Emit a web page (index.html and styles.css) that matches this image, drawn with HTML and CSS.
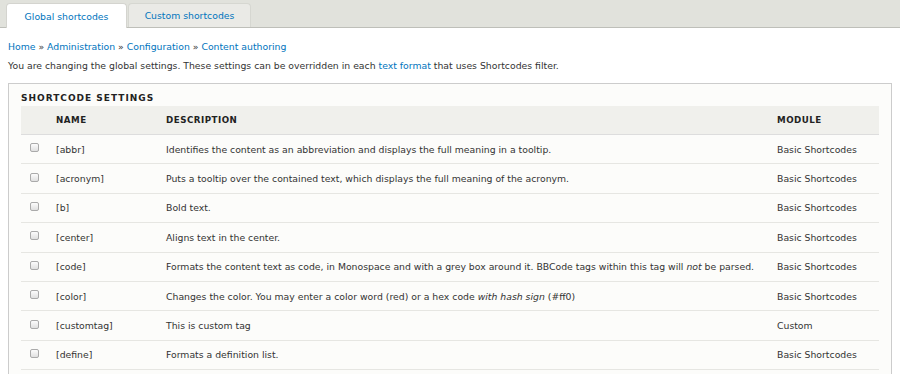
FILE: index.html
```html
<!DOCTYPE html>
<html>
<head>
<meta charset="utf-8">
<link rel="stylesheet" href="styles.css">
</head>
<body>
<div class="tabbar">
  <ul class="tabs">
    <li class="tab active"><a href="#">Global shortcodes</a></li>
    <li class="tab"><a href="#">Custom shortcodes</a></li>
  </ul>
</div>
<div class="content">
  <nav class="breadcrumb"><a href="#">Home</a> » <a href="#">Administration</a> » <a href="#">Configuration</a> » <a href="#">Content authoring</a></nav>
  <p class="intro">You are changing the global settings. These settings can be overridden in each <a href="#">text format</a> that uses Shortcodes filter.</p>
  <fieldset class="box">
    <div class="legend">Shortcode settings</div>
    <table class="grid">
      <thead>
        <tr><th class="c-check"></th><th class="c-name">Name</th><th class="c-desc">Description</th><th class="c-mod">Module</th></tr>
      </thead>
      <tbody>
        <tr><td class="c-check"><span class="cb"></span></td><td>[abbr]</td><td>Identifies the content as an abbreviation and displays the full meaning in a tooltip.</td><td>Basic Shortcodes</td></tr>
        <tr><td class="c-check"><span class="cb"></span></td><td>[acronym]</td><td>Puts a tooltip over the contained text, which displays the full meaning of the acronym.</td><td>Basic Shortcodes</td></tr>
        <tr><td class="c-check"><span class="cb"></span></td><td>[b]</td><td>Bold text.</td><td>Basic Shortcodes</td></tr>
        <tr><td class="c-check"><span class="cb"></span></td><td>[center]</td><td>Aligns text in the center.</td><td>Basic Shortcodes</td></tr>
        <tr><td class="c-check"><span class="cb"></span></td><td>[code]</td><td>Formats the content text as code, in Monospace and with a grey box around it. BBCode tags within this tag will <em>not</em> be parsed.</td><td>Basic Shortcodes</td></tr>
        <tr><td class="c-check"><span class="cb"></span></td><td>[color]</td><td>Changes the color. You may enter a color word (red) or a hex code <em>with hash sign</em> (#ff0)</td><td>Basic Shortcodes</td></tr>
        <tr><td class="c-check"><span class="cb"></span></td><td>[customtag]</td><td>This is custom tag</td><td>Custom</td></tr>
        <tr><td class="c-check"><span class="cb"></span></td><td>[define]</td><td>Formats a definition list.</td><td>Basic Shortcodes</td></tr>
      </tbody>
    </table>
  </fieldset>
</div>
</body>
</html>
```
FILE: styles.css
```css
html, body {
  margin: 0;
  padding: 0;
  background: #fff;
  font-family: "DejaVu Sans", sans-serif;
  color: #333;
  font-size: 9.3px;
}
a { color: #0074bd; text-decoration: none; }
.tabbar {
  background: #e1e2dc;
  border-bottom: 1px solid #bebfb9;
  height: 27px;
  padding: 0 6px;
}
.tabs {
  list-style: none;
  margin: 0;
  padding: 3px 0 0;
  display: flex;
  gap: 1px;
}
.tab {
  height: 24px;
  border-radius: 4px 4px 0 0;
  background: #eaeae6;
  border: 1px solid #d6d7d1;
  border-bottom: none;
  box-sizing: border-box;
  display: flex;
  align-items: center;
  justify-content: center;
  width: 123px;
  font-size: 9.3px;
}
.tab.active {
  background: #fff;
  width: 121px;
  height: 25px;
  border-color: #d4d4cf;
}
.content { padding: 0 8px; }
.breadcrumb {
  padding-top: 13px;
  line-height: 12px;
}
.intro {
  margin: 7px 0 0;
  line-height: 12px;
}
.box {
  margin: 11px 0 0;
  padding: 0 12px 10px;
  border: 1px solid #ccc;
  background: #fcfcfa;
  min-width: 0;
}
.legend {
  font-weight: bold;
  text-transform: uppercase;
  letter-spacing: 1px;
  font-size: 9px;
  padding: 9px 0 3px;
  color: #222;
}
.grid {
  width: 100%;
  border-collapse: collapse;
}
.grid th {
  background: #f0f0ec;
  text-align: left;
  text-transform: uppercase;
  font-weight: bold;
  font-size: 8.7px;
  letter-spacing: 0.5px;
  height: 28px;
  padding: 0 10px;
  border-bottom: 1px solid #ddd;
  color: #222;
}
.grid td {
  height: 28.4px;
  padding: 0 10px;
  border-bottom: 1px solid #e6e6e2;
  vertical-align: middle;
}
.grid .c-check { width: 16px; padding: 0 0 0 9px; }
.grid th.c-name { width: 90px; }
.grid th.c-mod { width: 92px; }
.cb {
  display: block;
  width: 9px;
  height: 9px;
  border: 1px solid #aaa;
  border-radius: 2px;
  background: linear-gradient(#fcfcfc, #e0e0e0);
  box-sizing: border-box;
  margin-top: -3px;
}
```
